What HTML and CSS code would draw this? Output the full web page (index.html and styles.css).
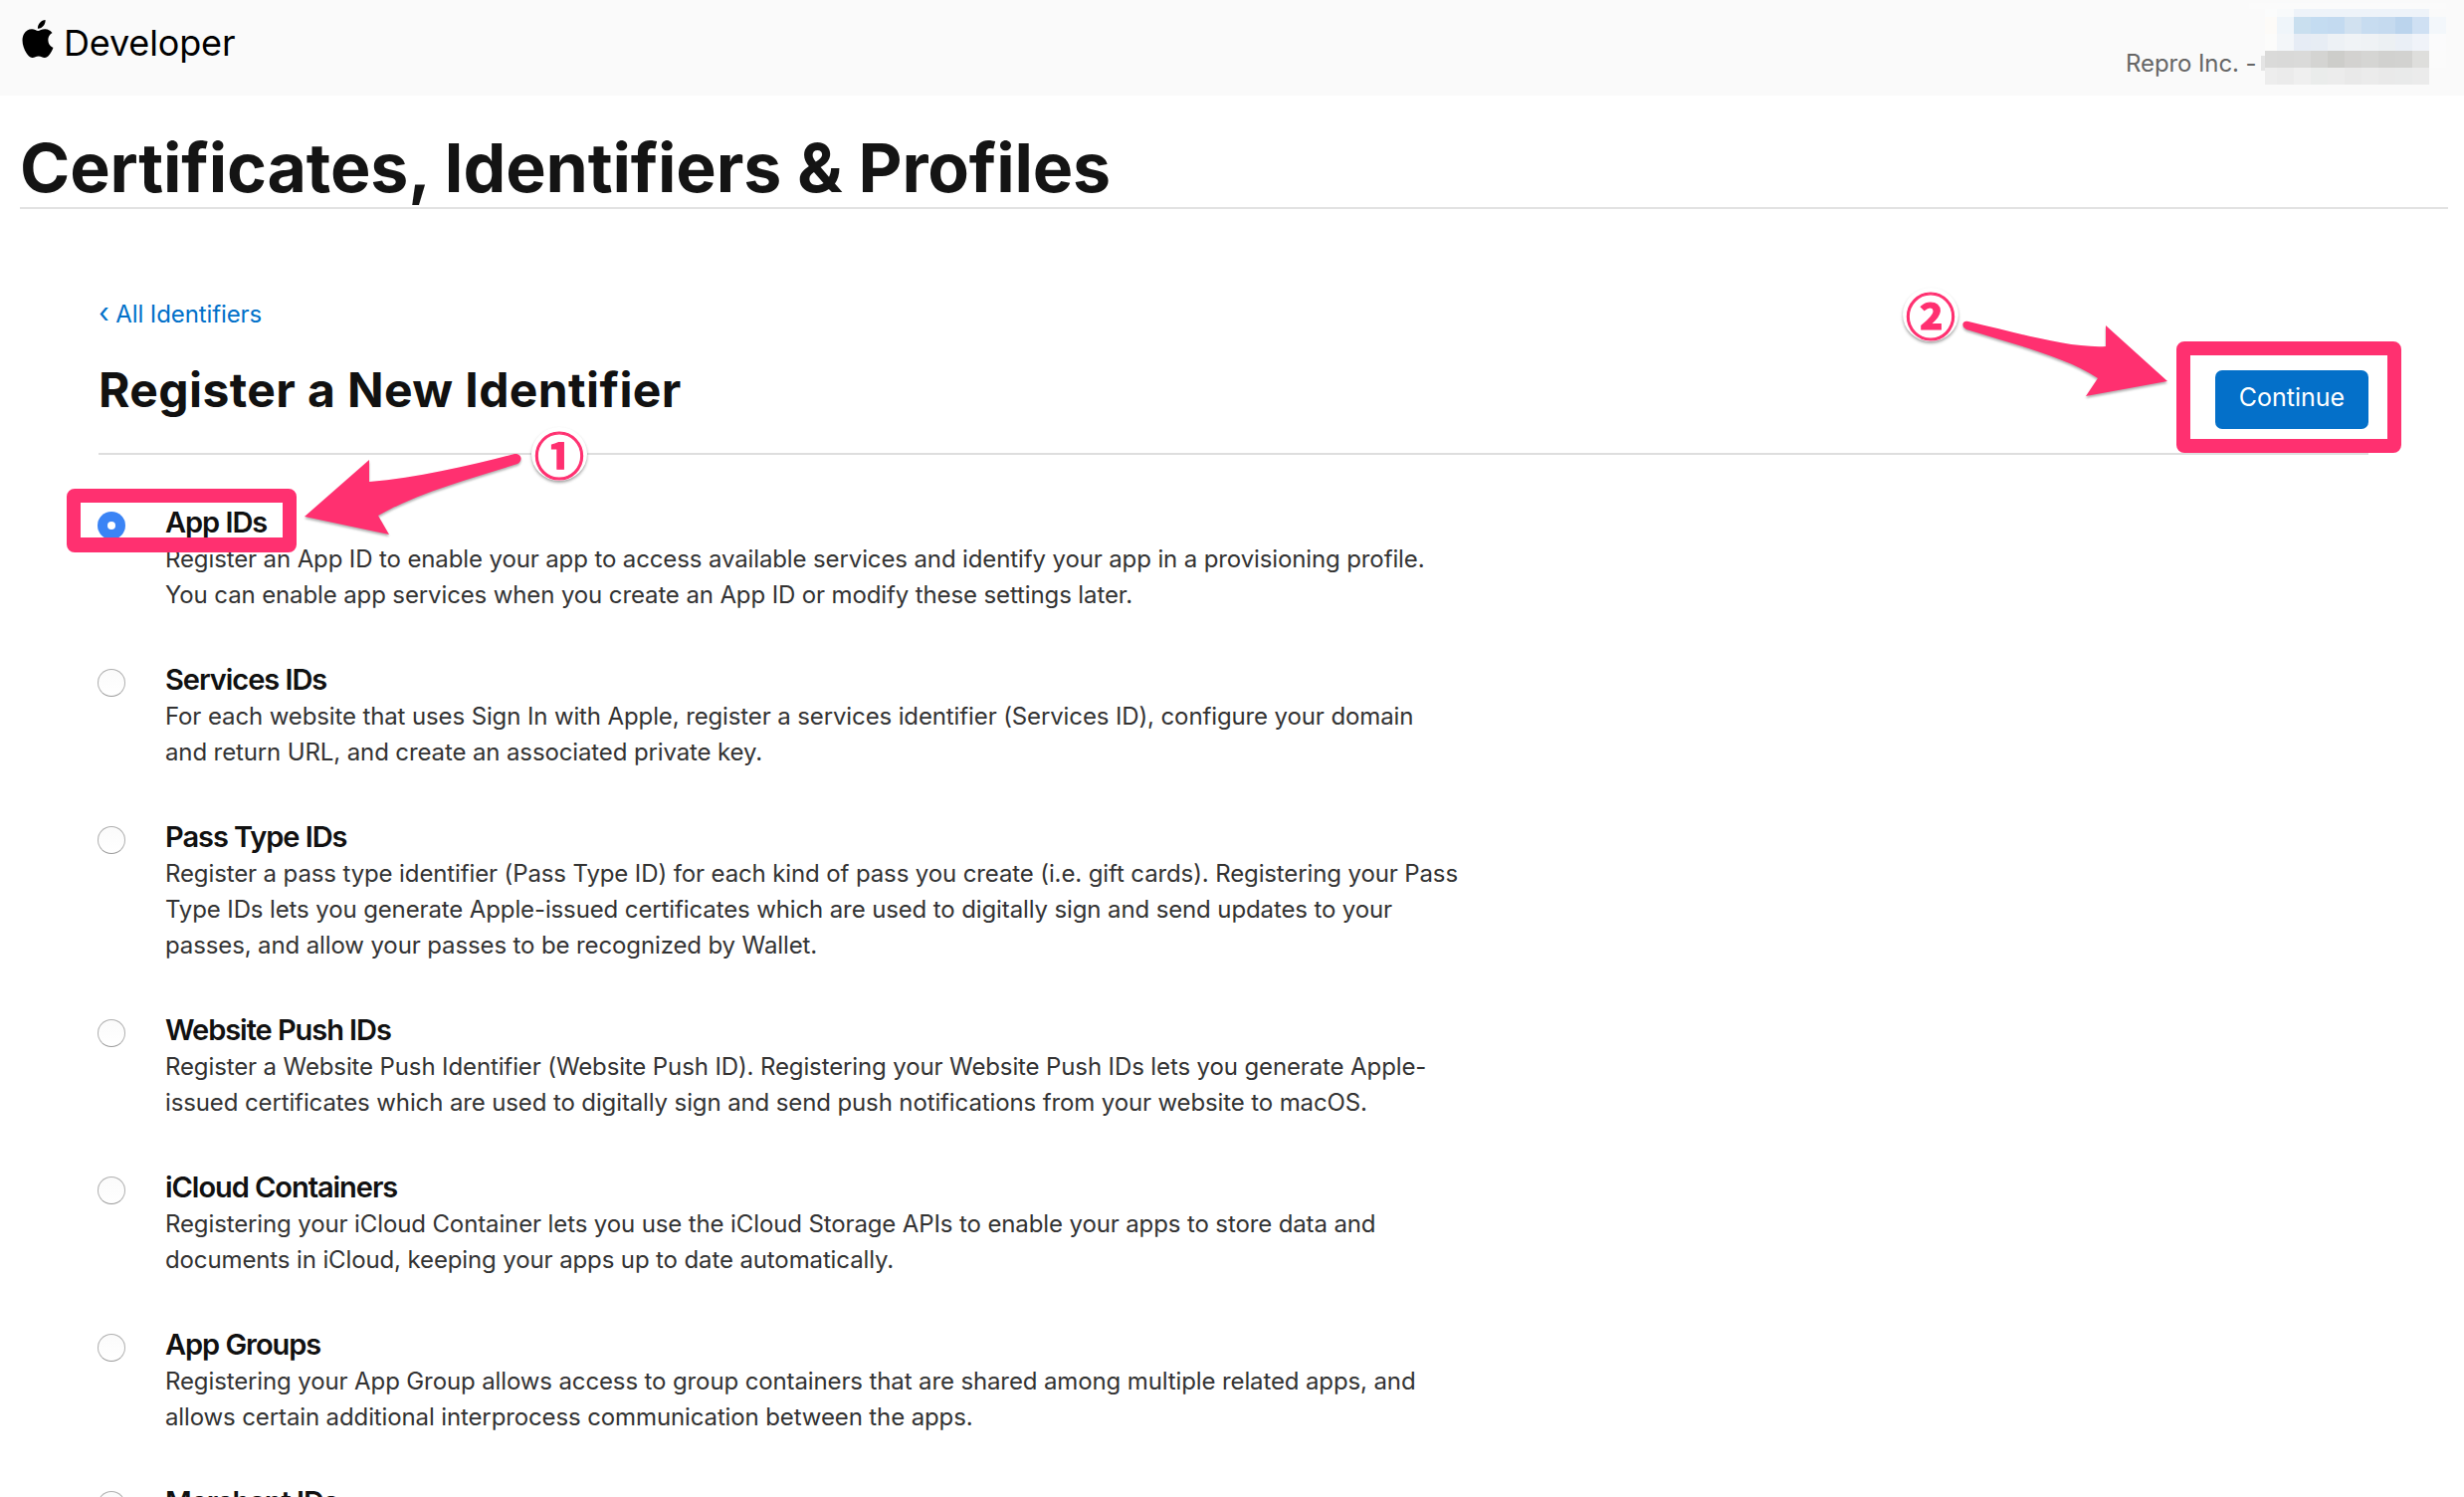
FILE: index.html
```html
<!DOCTYPE html>
<html lang="en">
<head>
<meta charset="utf-8">
<title>Certificates, Identifiers &amp; Profiles</title>
<link rel="stylesheet" href="styles.css">
</head>
<body>
<header class="topbar">
  <a class="brand">
    <svg class="apple" viewBox="0 0 24 24" aria-hidden="true"><path d="M12.152 6.896c-.948 0-2.415-1.078-3.96-1.04-2.04.027-3.91 1.183-4.961 3.014-2.117 3.675-.546 9.103 1.519 12.09 1.013 1.454 2.208 3.09 3.792 3.039 1.52-.065 2.09-.987 3.935-.987 1.831 0 2.35.987 3.96.948 1.637-.026 2.676-1.48 3.676-2.948 1.156-1.688 1.636-3.325 1.662-3.415-.039-.013-3.182-1.221-3.22-4.857-.026-3.04 2.48-4.494 2.597-4.559-1.429-2.09-3.623-2.324-4.39-2.376-2-.156-3.675 1.09-4.61 1.09zM15.53 3.83c.843-1.012 1.4-2.427 1.245-3.83-1.207.052-2.662.805-3.532 1.818-.78.896-1.454 2.338-1.273 3.714 1.338.104 2.715-.688 3.559-1.701"/></svg>
    <span>Developer</span>
  </a>
  <div class="account">Repro Inc. -</div>
  <svg class="mosaic" width="198" height="90" viewBox="0 0 198 90" shape-rendering="crispEdges" aria-hidden="true">
    <rect x="28" y="2" width="136" height="7" fill="#f9fafb"/>
    <rect x="0" y="3" width="198" height="6" fill="#fbfbfb"/>
    <rect x="45" y="9" width="136" height="8" fill="#eef3f9"/>
    <rect x="16" y="9" width="12" height="8" fill="#fbfcfc"/>
    <rect x="28" y="9" width="17" height="8" fill="#f8fafb"/>
    <g>
      <rect x="16" y="17" width="12" height="17" fill="#fdfbf8"/>
      <rect x="28" y="17" width="17" height="17" fill="#eff5fa"/>
      <rect x="45" y="17" width="17" height="17" fill="#c9dfef"/>
      <rect x="62" y="17" width="17" height="17" fill="#c4dcf1"/>
      <rect x="79" y="17" width="17" height="17" fill="#c3daf0"/>
      <rect x="96" y="17" width="17" height="17" fill="#d1e1f0"/>
      <rect x="113" y="17" width="17" height="17" fill="#c7dcf0"/>
      <rect x="130" y="17" width="17" height="17" fill="#c5daef"/>
      <rect x="147" y="17" width="17" height="17" fill="#bbd4ed"/>
      <rect x="164" y="17" width="17" height="17" fill="#cfe0f3"/>
      <rect x="181" y="17" width="17" height="17" fill="#f3f7fb"/>
    </g>
    <g>
      <rect x="16" y="34" width="12" height="17" fill="#fcfcfb"/>
      <rect x="28" y="34" width="17" height="17" fill="#f3f6f9"/>
      <rect x="45" y="34" width="17" height="17" fill="#e6ecf5"/>
      <rect x="62" y="34" width="17" height="17" fill="#e7edf4"/>
      <rect x="79" y="34" width="17" height="17" fill="#edf1f5"/>
      <rect x="96" y="34" width="17" height="17" fill="#f0f3f6"/>
      <rect x="113" y="34" width="17" height="17" fill="#eff2f5"/>
      <rect x="130" y="34" width="17" height="17" fill="#ecf0f3"/>
      <rect x="147" y="34" width="17" height="17" fill="#eaeff6"/>
      <rect x="164" y="34" width="17" height="17" fill="#f0f3f9"/>
      <rect x="181" y="34" width="17" height="17" fill="#fbfbfc"/>
    </g>
    <g>
      <rect x="12" y="56" width="4" height="15" fill="#e4e4e4"/>
      <rect x="16" y="51" width="12" height="17" fill="#dadad9"/>
      <rect x="28" y="51" width="17" height="17" fill="#d9d9d8"/>
      <rect x="45" y="51" width="17" height="17" fill="#dadad9"/>
      <rect x="62" y="51" width="17" height="17" fill="#d4d4d2"/>
      <rect x="79" y="51" width="17" height="17" fill="#cdcdca"/>
      <rect x="96" y="51" width="17" height="17" fill="#d3d2d0"/>
      <rect x="113" y="51" width="17" height="17" fill="#d5d5d3"/>
      <rect x="130" y="51" width="17" height="17" fill="#d1d1cf"/>
      <rect x="147" y="51" width="17" height="17" fill="#d2d2d0"/>
      <rect x="164" y="51" width="17" height="17" fill="#dededc"/>
      <rect x="181" y="51" width="17" height="17" fill="#fbfbfb"/>
    </g>
    <g>
      <rect x="16" y="68" width="12" height="17" fill="#ededed"/>
      <rect x="28" y="68" width="17" height="17" fill="#ebebeb"/>
      <rect x="45" y="68" width="17" height="17" fill="#efefef"/>
      <rect x="62" y="68" width="17" height="17" fill="#eaeceb"/>
      <rect x="79" y="68" width="17" height="17" fill="#ececec"/>
      <rect x="96" y="68" width="17" height="17" fill="#e9e9e9"/>
      <rect x="113" y="68" width="17" height="17" fill="#ebebeb"/>
      <rect x="130" y="68" width="17" height="17" fill="#e9e9e9"/>
      <rect x="147" y="68" width="17" height="17" fill="#e9eaea"/>
      <rect x="164" y="68" width="17" height="17" fill="#ebebeb"/>
    </g>
  </svg>
</header>

<div class="page-title">
  <h1>Certificates, Identifiers &amp; Profiles</h1>
</div>

<main class="content">
  <a class="back"><span class="chev">‹</span> All Identifiers</a>
  <div class="head-row">
    <h2>Register a New Identifier</h2>
    <button class="continue" type="button">Continue</button>
  </div>

  <ul class="choices">
    <li class="choice">
      <span class="radio radio-on"></span>
      <div><h3>App IDs</h3>
      <p>Register an App ID to enable your app to access available services and identify your app in a provisioning profile.<br>You can enable app services when you create an App ID or modify these settings later.</p></div>
    </li>
    <li class="choice">
      <span class="radio"></span>
      <div><h3>Services IDs</h3>
      <p>For each website that uses Sign In with Apple, register a services identifier (Services ID), configure your domain<br>and return URL, and create an associated private key.</p></div>
    </li>
    <li class="choice">
      <span class="radio"></span>
      <div><h3>Pass Type IDs</h3>
      <p>Register a pass type identifier (Pass Type ID) for each kind of pass you create (i.e. gift cards). Registering your Pass<br>Type IDs lets you generate Apple-issued certificates which are used to digitally sign and send updates to your<br>passes, and allow your passes to be recognized by Wallet.</p></div>
    </li>
    <li class="choice">
      <span class="radio"></span>
      <div><h3>Website Push IDs</h3>
      <p>Register a Website Push Identifier (Website Push ID). Registering your Website Push IDs lets you generate Apple-<br>issued certificates which are used to digitally sign and send push notifications from your website to macOS.</p></div>
    </li>
    <li class="choice">
      <span class="radio"></span>
      <div><h3>iCloud Containers</h3>
      <p>Registering your iCloud Container lets you use the iCloud Storage APIs to enable your apps to store data and<br>documents in iCloud, keeping your apps up to date automatically.</p></div>
    </li>
    <li class="choice">
      <span class="radio"></span>
      <div><h3>App Groups</h3>
      <p>Registering your App Group allows access to group containers that are shared among multiple related apps, and<br>allows certain additional interprocess communication between the apps.</p></div>
    </li>
    <li class="choice">
      <span class="radio"></span>
      <div><h3>Merchant IDs</h3></div>
    </li>
  </ul>
</main>

<div class="mark mark-radio"></div>
<div class="mark mark-button"></div>
<svg class="arrows" width="2476" height="1504" viewBox="0 0 2476 1504" aria-hidden="true">
  <path class="arrow" d="M517 456 C470 468 420 480 371 484 L371 462 L306 519 L391 537 L380 518 C420 495 470 482 520 466 C526 463 524 455 517 456Z"/>
  <path class="arrow" d="M1978 323 C2030 335 2080 350 2116 348 L2116 327 L2178 383 L2096 398 L2108 380 C2075 358 2020 345 1976 331 C1970 328 1972 321 1978 323Z"/>
</svg>
<div class="badge badge-one">①</div>
<div class="badge badge-two">②</div>
</body>
</html>
```

FILE: styles.css
```css
* { box-sizing: border-box; }
html, body { margin: 0; height: 1504px; overflow: hidden; background: #fff; }
body { font-family: Inter, "Liberation Sans", sans-serif; color: #111; position: relative; }

.topbar { height: 96px; background: #fafafa; display: flex; align-items: flex-start; position: relative; }
.brand { display: flex; align-items: center; gap: 7px; padding: 18px 0 0 19px; color: #000; font-size: 36px; letter-spacing: -0.15px; line-height: 50px; }
.apple { width: 38px; height: 38px; display: block; fill: #000; margin-top: -8px; }
.account { position: absolute; left: 2136px; top: 49px; font-size: 24px; line-height: 30px; color: #666; letter-spacing: -0.1px; white-space: nowrap; }
.mosaic { position: absolute; left: 2260px; top: 0; }

.page-title { margin: 0 16px 0 20px; border-bottom: 2px solid #e2e2e2; height: 114px; }
h1 { margin: 0; padding-top: 32px; font-size: 68px; line-height: 80px; font-weight: 700; color: #141414; white-space: nowrap; letter-spacing: -0.17px; }

.content { padding: 0 96px 0 99px; }
.back { display: block; margin-top: 87px; font-size: 24px; line-height: 34px; color: #0070c9; letter-spacing: -0.1px; }
.chev { font-size: 28px; }
.head-row { display: flex; justify-content: space-between; align-items: center; height: 126px; margin-top: -2px; padding-bottom: 3px; border-bottom: 2px solid #dedede; position: relative; }
h2 { margin: 0; font-size: 48px; line-height: 54px; font-weight: 700; color: #111; letter-spacing: 0.4px; }
.continue { position: absolute; right: 0; top: 41px; width: 154px; height: 59px; border: 0; border-radius: 7px; background: #0470c9; color: #fff; font: 400 25px/55px Inter, sans-serif; padding: 0 0 4px; }

.choices { list-style: none; margin: 48px 0 0; padding: 0; display: flex; flex-direction: column; gap: 47px; }
.choice { display: flex; gap: 40px; }
.radio { width: 28px; height: 28px; flex: none; border-radius: 50%; margin: 9px 0 0 -1px; background: linear-gradient(#fbfbfb, #fff); border: 1.5px solid #b0b0b0; border-bottom-color: #9a9a9a; }
.radio-on { background: #3b84f5; border: 0; position: relative; }
.radio-on::after { content: ""; position: absolute; left: 10px; top: 10px; width: 8px; height: 8px; border-radius: 50%; background: #fff; }
h3 { margin: 0; font-size: 29px; line-height: 39px; font-weight: 600; color: #111; letter-spacing: -1.05px; }
.choice p { margin: 0; font-size: 24px; line-height: 36px; color: #333; white-space: nowrap; letter-spacing: -0.12px; }

.mark { position: absolute; border: 14px solid #ff3070; border-radius: 8px; }
.mark-radio { left: 67px; top: 491px; width: 231px; height: 64px; border-width: 14px 14px 15px; }
.mark-button { left: 2187px; top: 343px; width: 226px; height: 112px; }
.arrows { position: absolute; left: 0; top: 0; pointer-events: none; }
.arrow { fill: #ff3070; filter: drop-shadow(0 2px 1px rgba(0,0,0,.3)); }
.badge { position: absolute; width: 56px; height: 54px; border-radius: 50%; background: #fff; box-shadow: 0 2px 3px rgba(0,0,0,.35); color: #ff3070; font: 700 50px/52px "Noto Sans CJK JP", sans-serif; text-align: center; -webkit-text-stroke: 1.2px #ff3070; }
.badge-one { left: 534px; top: 429px; }
.badge-two { left: 1912px; top: 289px; }
```
